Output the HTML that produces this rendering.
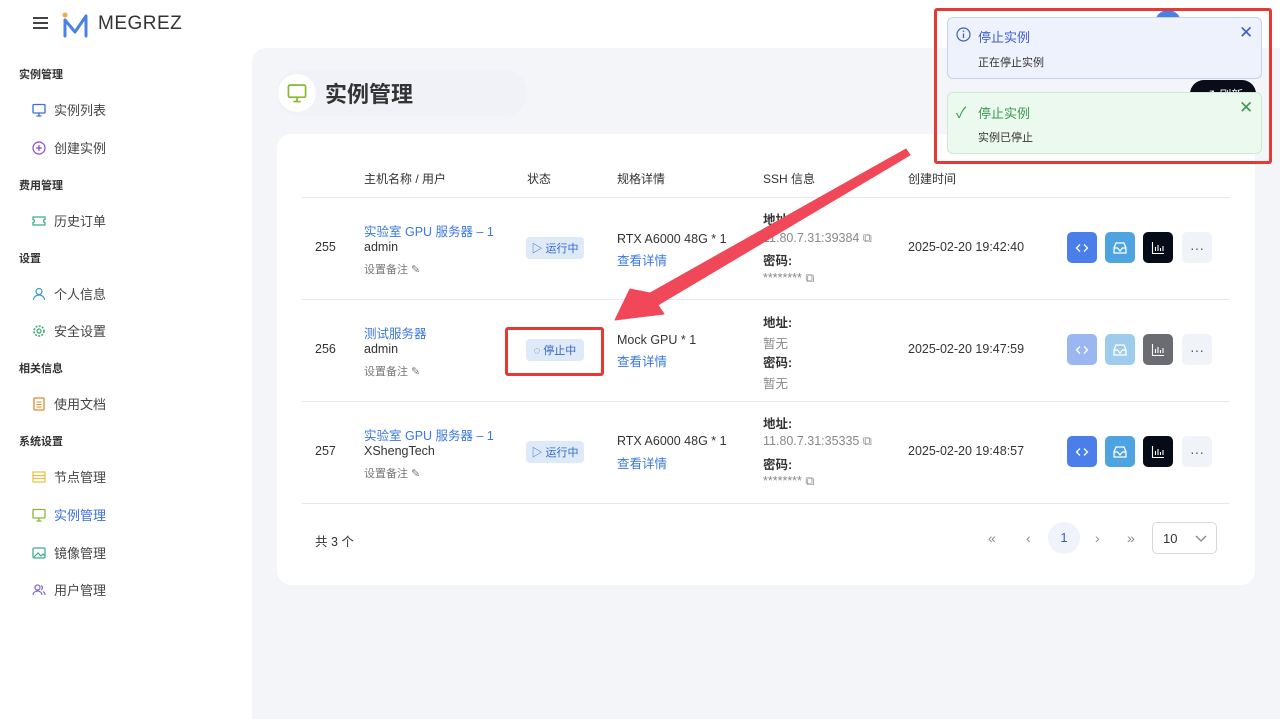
<!DOCTYPE html>
<html><head><meta charset="utf-8">
<style>
*{box-sizing:border-box;margin:0;padding:0}
body{width:1280px;height:719px;overflow:hidden;background:#fff;font-family:"Liberation Sans","Noto Sans CJK SC",sans-serif;color:#333;position:relative;font-size:13px}
.abs{position:absolute}
.sec{position:absolute;left:19px;font-size:11px;color:#333;font-weight:bold}
.item{position:absolute;left:32px;font-size:13px;color:#444;display:flex;align-items:center;gap:8px}
.item svg{width:14px;height:14px}
.panel{position:absolute;left:252px;top:48px;width:1028px;height:671px;background:#f3f5f9;border-top-left-radius:14px}
.card{position:absolute;left:277px;top:134px;width:978px;height:451px;background:#fff;border-radius:14px}
.hd{position:absolute;top:170px;font-size:12px;color:#333}
.line{position:absolute;left:302px;width:928px;height:1px;background:#e8e8e8}
.t{position:absolute;font-size:12.5px;color:#333;white-space:nowrap}
.blue{color:#3a78e0}
.gray{color:#888}
.note{font-size:11px;color:#777}
.tag{position:absolute;width:58px;height:22px;background:#dfeaf8;border-radius:4px;font-size:11px;color:#3568c8;display:flex;align-items:center;justify-content:center;gap:3px}
.btn{position:absolute;width:30px;height:31px;border-radius:5px;display:flex;align-items:center;justify-content:center}
.b1{background:#4a7ee8}.b2{background:#4ea4e0}.b3{background:#060b18}.b4{background:#f0f3f7}
.dim{opacity:.55}
.toast{position:absolute;left:947px;width:315px;border-radius:6px}
</style></head><body>
<div class="abs" style="left:33px;top:17px;width:15px;height:2px;background:#444;box-shadow:0 5px 0 #444,0 10px 0 #444"></div>
<svg class="abs" style="left:62px;top:12px" width="28" height="26" viewBox="0 0 28 26"><circle cx="3" cy="3" r="2.5" fill="#f0a850"/><path d="M3 8V24M3 8L13 20L24 4V24" fill="none" stroke="#4a80e8" stroke-width="3" stroke-linecap="round" stroke-linejoin="round"/></svg>
<div class="abs" style="left:98px;top:13px;font-size:19px;color:#333;letter-spacing:.5px">MEGREZ</div>
<div class="sec" style="top:66px">实例管理</div>
<div class="item" style="top:100px"><svg viewBox="0 0 14 14"><rect x="1" y="1.5" width="12" height="8.5" rx="1" fill="none" stroke="#3a70d0" stroke-width="1.3"/><path d="M7 10v3M4.5 13h5" stroke="#3a70d0" stroke-width="1.3"/></svg>实例列表</div>
<div class="item" style="top:138px"><svg viewBox="0 0 14 14"><circle cx="7" cy="7" r="6" fill="none" stroke="#8a48c8" stroke-width="1.2"/><path d="M7 4v6M4 7h6" stroke="#8a48c8" stroke-width="1.2"/></svg>创建实例</div>
<div class="sec" style="top:177px">费用管理</div>
<div class="item" style="top:211px"><svg viewBox="0 0 14 14"><path d="M1 3h12v2.5a1.5 1.5 0 0 0 0 3V11H1V8.5a1.5 1.5 0 0 0 0-3z" fill="none" stroke="#3aaa88" stroke-width="1.2"/></svg>历史订单</div>
<div class="sec" style="top:250px">设置</div>
<div class="item" style="top:284px"><svg viewBox="0 0 14 14"><circle cx="7" cy="4.5" r="3" fill="none" stroke="#3a9ad0" stroke-width="1.2"/><path d="M1.5 13a5.5 5 0 0 1 11 0" fill="none" stroke="#3a9ad0" stroke-width="1.2"/></svg>个人信息</div>
<div class="item" style="top:321px"><svg viewBox="0 0 14 14"><circle cx="7" cy="7" r="5" fill="none" stroke="#3aaa70" stroke-width="1.6" stroke-dasharray="2 1.3"/><circle cx="7" cy="7" r="2" fill="none" stroke="#3aaa70" stroke-width="1.2"/></svg>安全设置</div>
<div class="sec" style="top:360px">相关信息</div>
<div class="item" style="top:394px"><svg viewBox="0 0 14 14"><rect x="2" y="1" width="10" height="12" rx="1" fill="none" stroke="#e08a30" stroke-width="1.3"/><path d="M4.5 5h5M4.5 7.5h5M4.5 10h5" stroke="#e08a30" stroke-width="1"/></svg>使用文档</div>
<div class="sec" style="top:433px">系统设置</div>
<div class="item" style="top:467px"><svg viewBox="0 0 14 14"><rect x="1" y="2" width="12" height="10" fill="none" stroke="#e8c040" stroke-width="1.2"/><path d="M1 5.5h12M1 8.5h12" stroke="#e8c040" stroke-width="1.2"/></svg>节点管理</div>
<div class="item" style="top:505px;color:#3a70d8"><svg viewBox="0 0 14 14"><rect x="1" y="1.5" width="12" height="8.5" rx="1" fill="none" stroke="#8ab830" stroke-width="1.3"/><path d="M7 10v3M4.5 13h5" stroke="#8ab830" stroke-width="1.3"/></svg>实例管理</div>
<div class="item" style="top:543px"><svg viewBox="0 0 14 14"><rect x="1" y="2" width="12" height="10" rx="1" fill="none" stroke="#3aaa88" stroke-width="1.2"/><path d="M2 11l4-4 3 3 2-2 2 2" fill="none" stroke="#3aaa88" stroke-width="1.2"/></svg>镜像管理</div>
<div class="item" style="top:580px"><svg viewBox="0 0 14 14"><circle cx="5.5" cy="4.5" r="2.5" fill="none" stroke="#7a6ad8" stroke-width="1.2"/><path d="M1 12a4.5 4 0 0 1 9 0M9 2.5a2.5 2.5 0 0 1 0 4.5M11 8.5a4 4 0 0 1 2 3.5" fill="none" stroke="#7a6ad8" stroke-width="1.2"/></svg>用户管理</div>
<div class="panel"></div>
<div class="abs" style="left:277px;top:70px;width:250px;height:46px;background:#f0f2f7;border-radius:23px"></div>
<div class="abs" style="left:278px;top:74px;width:38px;height:38px;border-radius:50%;background:#fff"></div>
<svg class="abs" style="left:287px;top:83px" width="20" height="20" viewBox="0 0 14 14"><rect x="1" y="1.5" width="12" height="8.5" rx="1" fill="none" stroke="#8ab830" stroke-width="1.2"/><path d="M7 10v3M4.5 13h5" stroke="#8ab830" stroke-width="1.2"/></svg>
<div class="abs" style="left:325px;top:77px;font-size:22px;font-weight:bold;color:#333">实例管理</div>
<div class="abs" style="left:1190px;top:80px;width:66px;height:28px;border-radius:14px;background:#0a0d18;color:#fff;font-size:12px;padding:6px 0 0 14px">↗ 刷新</div>
<div class="card"></div>
<div class="hd" style="left:364px">主机名称 / 用户</div>
<div class="hd" style="left:527px">状态</div>
<div class="hd" style="left:617px">规格详情</div>
<div class="hd" style="left:763px">SSH 信息</div>
<div class="hd" style="left:908px">创建时间</div>
<div class="line" style="top:197px"></div>
<div class="line" style="top:299px"></div>
<div class="line" style="top:401px"></div>
<div class="line" style="top:503px"></div>

<div class="t" style="left:315px;top:240px">255</div>
<div class="t blue" style="left:364px;top:221px">实验室 GPU 服务器 – 1</div>
<div class="t" style="left:364px;top:240px">admin</div>
<div class="t note" style="left:364px;top:261px">设置备注 ✎</div>
<div class="tag" style="left:526px;top:237px">▷ 运行中</div>
<div class="t" style="left:617px;top:232px">RTX A6000 48G * 1</div>
<div class="t blue" style="left:617px;top:250px">查看详情</div>
<div class="t" style="left:763px;top:209px;font-weight:bold">地址:</div>
<div class="t gray" style="left:763px;top:231px">11.80.7.31:39384 ⧉</div>
<div class="t" style="left:763px;top:250px;font-weight:bold">密码:</div>
<div class="t gray" style="left:763px;top:271px">******** ⧉</div>
<div class="t" style="left:908px;top:240px">2025-02-20 19:42:40</div>
<div class="t" style="left:315px;top:342px">256</div>
<div class="t blue" style="left:364px;top:323px">测试服务器</div>
<div class="t" style="left:364px;top:342px">admin</div>
<div class="t note" style="left:364px;top:363px">设置备注 ✎</div>
<div class="tag" style="left:526px;top:339px">◌ 停止中</div>
<div class="abs" style="left:505px;top:327px;width:99px;height:49px;border:3px solid #e53935;border-radius:3px"></div>
<div class="t" style="left:617px;top:333px">Mock GPU * 1</div>
<div class="t blue" style="left:617px;top:351px">查看详情</div>
<div class="t" style="left:763px;top:312px;font-weight:bold">地址:</div>
<div class="t gray" style="left:763px;top:333px">暂无</div>
<div class="t" style="left:763px;top:352px;font-weight:bold">密码:</div>
<div class="t gray" style="left:763px;top:373px">暂无</div>
<div class="t" style="left:908px;top:342px">2025-02-20 19:47:59</div>
<div class="t" style="left:315px;top:444px">257</div>
<div class="t blue" style="left:364px;top:425px">实验室 GPU 服务器 – 1</div>
<div class="t" style="left:364px;top:444px">XShengTech</div>
<div class="t note" style="left:364px;top:465px">设置备注 ✎</div>
<div class="tag" style="left:526px;top:441px">▷ 运行中</div>
<div class="t" style="left:617px;top:434px">RTX A6000 48G * 1</div>
<div class="t blue" style="left:617px;top:453px">查看详情</div>
<div class="t" style="left:763px;top:413px;font-weight:bold">地址:</div>
<div class="t gray" style="left:763px;top:434px">11.80.7.31:35335 ⧉</div>
<div class="t" style="left:763px;top:454px;font-weight:bold">密码:</div>
<div class="t gray" style="left:763px;top:474px">******** ⧉</div>
<div class="t" style="left:908px;top:444px">2025-02-20 19:48:57</div>

<div class="btn b1" style="left:1067px;top:232px"><svg width="14" height="14" viewBox="0 0 14 14"><path d="M5 3.5L1.5 7 5 10.5M9 3.5L12.5 7 9 10.5" fill="none" stroke="#fff" stroke-width="1.3"/></svg></div>
<div class="btn b2" style="left:1105px;top:232px"><svg width="16" height="14" viewBox="0 0 16 14"><path d="M2 7l2-5h8l2 5v5H2zM2 7h3.5l2.5 3 2.5-3H14" fill="none" stroke="#fff" stroke-width="1.3"/></svg></div>
<div class="btn b3" style="left:1143px;top:232px"><svg width="14" height="14" viewBox="0 0 14 14"><path d="M1.5 1v11.5H13M4.5 10V6M7 10V4M9.5 10V7M12 10V5" fill="none" stroke="#fff" stroke-width="1.1"/></svg></div>
<div class="btn b4" style="left:1182px;top:232px;color:#555;font-size:14px">···</div>
<div class="btn b1 dim" style="left:1067px;top:334px"><svg width="14" height="14" viewBox="0 0 14 14"><path d="M5 3.5L1.5 7 5 10.5M9 3.5L12.5 7 9 10.5" fill="none" stroke="#fff" stroke-width="1.3"/></svg></div>
<div class="btn b2 dim" style="left:1105px;top:334px"><svg width="16" height="14" viewBox="0 0 16 14"><path d="M2 7l2-5h8l2 5v5H2zM2 7h3.5l2.5 3 2.5-3H14" fill="none" stroke="#fff" stroke-width="1.3"/></svg></div>
<div class="btn b3" style="left:1143px;top:334px;background:#6a6c72"><svg width="14" height="14" viewBox="0 0 14 14"><path d="M1.5 1v11.5H13M4.5 10V6M7 10V4M9.5 10V7M12 10V5" fill="none" stroke="#fff" stroke-width="1.1"/></svg></div>
<div class="btn b4" style="left:1182px;top:334px;color:#555;font-size:14px">···</div>
<div class="btn b1" style="left:1067px;top:436px"><svg width="14" height="14" viewBox="0 0 14 14"><path d="M5 3.5L1.5 7 5 10.5M9 3.5L12.5 7 9 10.5" fill="none" stroke="#fff" stroke-width="1.3"/></svg></div>
<div class="btn b2" style="left:1105px;top:436px"><svg width="16" height="14" viewBox="0 0 16 14"><path d="M2 7l2-5h8l2 5v5H2zM2 7h3.5l2.5 3 2.5-3H14" fill="none" stroke="#fff" stroke-width="1.3"/></svg></div>
<div class="btn b3" style="left:1143px;top:436px"><svg width="14" height="14" viewBox="0 0 14 14"><path d="M1.5 1v11.5H13M4.5 10V6M7 10V4M9.5 10V7M12 10V5" fill="none" stroke="#fff" stroke-width="1.1"/></svg></div>
<div class="btn b4" style="left:1182px;top:436px;color:#555;font-size:14px">···</div>

<div class="t" style="left:315px;top:531px">共 3 个</div>
<div class="t gray" style="left:988px;top:530px;font-size:14px">«</div>
<div class="t gray" style="left:1026px;top:530px;font-size:14px">‹</div>
<div class="abs" style="left:1048px;top:522px;width:32px;height:32px;border-radius:50%;background:#eef3fc;color:#3a5ec0;text-align:center;line-height:32px">1</div>
<div class="t gray" style="left:1095px;top:530px;font-size:14px">›</div>
<div class="t gray" style="left:1127px;top:530px;font-size:14px">»</div>
<div class="abs" style="left:1152px;top:522px;width:65px;height:32px;border:1px solid #d8d8d8;border-radius:5px;padding:8px 0 0 10px;font-size:13px">10<svg style="position:absolute;left:42px;top:12px" width="12" height="8" viewBox="0 0 12 8"><path d="M1 1l5 5 5-5" fill="none" stroke="#888" stroke-width="1.3"/></svg></div>

<div class="abs" style="left:1155px;top:10px;width:26px;height:26px;border-radius:50%;background:#4a7ee8"></div>

<div class="toast" style="top:17px;height:62px;background:#eef2fc;border:1px solid #c6d2f0"></div>
<svg class="abs" style="left:956px;top:27px" width="15" height="15" viewBox="0 0 15 15"><circle cx="7.5" cy="7.5" r="6.5" fill="none" stroke="#3a5ed0" stroke-width="1.2"/><path d="M7.5 6.5v4.5" stroke="#3a5ed0" stroke-width="1.3"/><circle cx="7.5" cy="4.3" r=".8" fill="#3a5ed0"/></svg>
<div class="t" style="left:978px;top:27px;color:#3a5ed0;font-size:13px">停止实例</div>
<div class="t" style="left:978px;top:54px;font-size:11px;color:#333">正在停止实例</div>
<div class="t" style="left:1239px;top:23px;color:#3a5ed0;font-size:17px">✕</div>
<div class="toast" style="top:92px;height:62px;background:#ecf9ee;border:1px solid #c8ecd0"></div>
<div class="t" style="left:956px;top:102px;color:#3a9a50;font-size:15px">✓</div>
<div class="t" style="left:978px;top:103px;color:#3a9a50;font-size:13px">停止实例</div>
<div class="t" style="left:978px;top:129px;font-size:11px;color:#333">实例已停止</div>
<div class="t" style="left:1239px;top:98px;color:#3a9a50;font-size:17px">✕</div>
<div class="abs" style="left:934px;top:8px;width:338px;height:156px;border:3px solid #e53935;border-radius:3px"></div>

<svg class="abs" style="left:0;top:0" width="1280" height="719"><polygon points="906,149 910,155 658,305 664,314 615,320 630,289 650,293" fill="#f04858" stroke="#f04858" stroke-width="1" stroke-linejoin="round"/></svg>
</body></html>
